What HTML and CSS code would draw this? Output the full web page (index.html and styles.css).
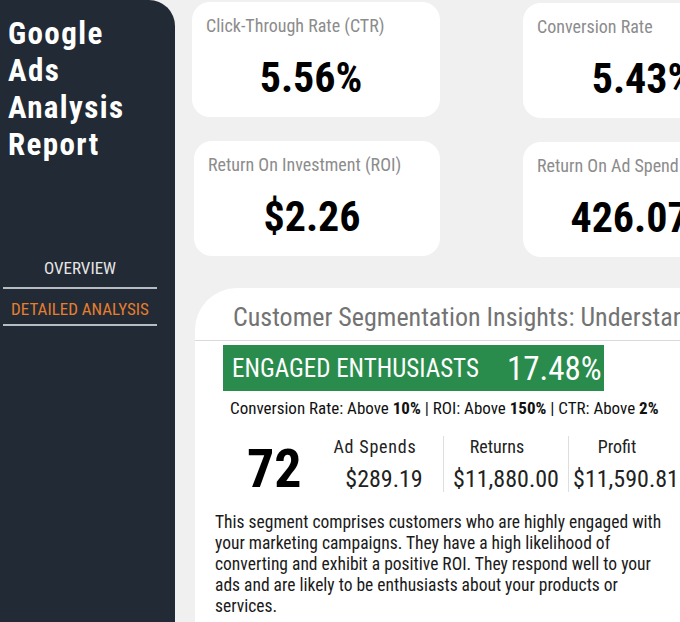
FILE: index.html
```html
<!DOCTYPE html>
<html>
<head>
<meta charset="utf-8">
<link rel="stylesheet" href="styles.css">
</head>
<body>
<div class="page">
  <aside class="sidebar">
    <h1 class="title">Google<br>Ads<br>Analysis<br>Report</h1>
    <nav class="nav">
      <div class="nav-item">OVERVIEW</div>
      <div class="nav-item active">DETAILED ANALYSIS</div>
    </nav>
  </aside>
  <main class="main">
    <div class="kpis">
      <div class="card c1">
        <div class="label">Click-Through Rate (CTR)</div>
        <div class="value">5.56%</div>
      </div>
      <div class="card c2">
        <div class="label">Conversion Rate</div>
        <div class="value">5.43%</div>
      </div>
      <div class="card c3">
        <div class="label">Return On Investment (ROI)</div>
        <div class="value">$2.26</div>
      </div>
      <div class="card c4">
        <div class="label">Return On Ad Spend (ROAS)</div>
        <div class="value">426.07%</div>
      </div>
    </div>
    <section class="segment">
      <h2 class="seg-title">Customer Segmentation Insights: Understanding Your Audience</h2>
      <div class="seg-body">
        <div class="badge"><span class="badge-name">ENGAGED ENTHUSIASTS</span><span class="badge-pct">17.48%</span></div>
        <div class="criteria">Conversion Rate: Above <b>10%</b> | ROI: Above <b>150%</b> | CTR: Above <b>2%</b></div>
        <div class="stats">
          <div class="count">72</div>
          <div class="stat s1">
            <div class="stat-label">Ad Spends</div>
            <div class="stat-value">$289.19</div>
          </div>
          <div class="stat s2 sep">
            <div class="stat-label">Returns</div>
            <div class="stat-value">$11,880.00</div>
          </div>
          <div class="stat s3 sep">
            <div class="stat-label">Profit</div>
            <div class="stat-value">$11,590.81</div>
          </div>
        </div>
        <p class="desc">This segment comprises customers who are highly engaged with your marketing campaigns. They have a high likelihood of converting and exhibit a positive ROI. They respond well to your ads and are likely to be enthusiasts about your products or services.</p>
      </div>
    </section>
  </main>
</div>
</body>
</html>
```
FILE: styles.css
```css
html, body {
  margin: 0;
  padding: 0;
  background: #f0f0f0;
  font-family: "Roboto Condensed", "Roboto", sans-serif;
  overflow: hidden;
}
.page {
  display: flex;
  width: 680px;
  height: 622px;
  overflow: hidden;
}
.sidebar {
  flex: 0 0 175px;
  height: 660px;
  background: #222a35;
  border-radius: 0 26px 26px 0;
  color: #fff;
}
.title {
  margin: 15px 0 0 8px;
  font-weight: bold;
  font-size: 31px;
  line-height: 37px;
  letter-spacing: 1.4px;
}
.nav {
  margin-top: 87px;
  display: flex;
  flex-direction: column;
}
.nav-item {
  width: 154px;
  margin-left: 3px;
  text-align: center;
  font-size: 17px;
  line-height: 20px;
  padding: 8px 0 9px;
  border-bottom: 2px solid #b7bcc2;
  color: #e6e6e6;
}
.nav-item.active {
  color: #e67e2e;
  padding: 10px 0 5px;
}
.main {
  flex: 1;
  min-width: 0;
  padding: 2px 0 0 17px;
}
.kpis {
  display: grid;
  grid-template-columns: 248px 250px;
  column-gap: 83px;
  row-gap: 23px;
}
.card {
  background: #fff;
  border-radius: 18px;
  height: 115px;
  box-sizing: border-box;
  padding: 13px 0 0 14px;
  white-space: nowrap;
  overflow: hidden;
}
.c3 { margin-left: 2px; }
.c2, .c4 { margin-top: 1px; }
.label {
  font-size: 18px;
  line-height: 21px;
  color: #8c8c8c;
}
.value {
  margin-top: 17px;
  font-weight: bold;
  font-size: 42px;
  line-height: 49px;
  text-align: center;
  padding-right: 24px;
  color: #000;
}
.segment {
  margin: 31px 0 0 3px;
  background: #fff;
  border-radius: 42px 0 0 0;
  width: 520px;
  height: 360px;
  white-space: nowrap;
  overflow: hidden;
}
.seg-title {
  margin: 0;
  padding: 12px 0 6px 38px;
  font-weight: normal;
  font-size: 26px;
  line-height: 34px;
  color: #737373;
  border-bottom: 1px solid #dadada;
}
.seg-body {
  padding: 4px 0 0 28px;
}
.badge {
  display: flex;
  align-items: center;
  background: #2a8c4c;
  color: #fff;
  width: 381px;
  height: 46px;
  box-sizing: border-box;
  padding: 0 0 0 9px;
  gap: 28px;
}
.badge-name { font-size: 25px; }
.badge-pct { font-size: 33px; }
.criteria {
  margin: 7px 0 0 7px;
  font-size: 17px;
  line-height: 20px;
  color: #111;
}
.stats {
  display: flex;
  align-items: center;
  margin-top: 17px;
  height: 58px;
}
.count {
  width: 102px;
  padding: 8px 0 0 24px;
  box-sizing: border-box;
  font-weight: bold;
  font-size: 54px;
  color: #000;
}
.stat {
  height: 56px;
  box-sizing: border-box;
  text-align: center;
  color: #222;
}
.s1 { width: 118px; }
.s2 { width: 125px; }
.s3 { width: 115px; }
.stat.sep { border-left: 1px solid #dedede; }
.stat-label { font-size: 18px; line-height: 22px; padding-right: 18px; }
.s1 .stat-label { letter-spacing: 0.8px; }
.stat-value { font-size: 24px; line-height: 30px; margin-top: 6px; }
.desc {
  margin: 19px 0 0 -8px;
  width: 452px;
  white-space: normal;
  font-size: 17.5px;
  line-height: 21px;
  color: #1a1a1a;
}
```
